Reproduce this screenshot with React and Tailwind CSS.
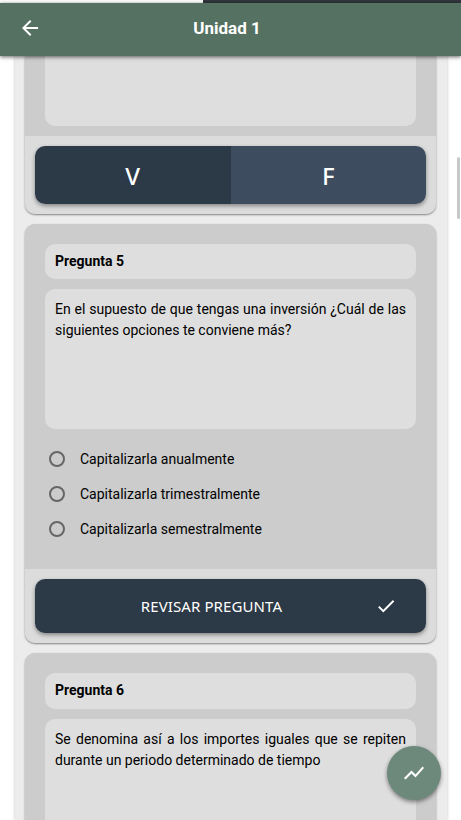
import React from "react";
import { MdArrowBack, MdCheck, MdShowChart } from "react-icons/md";

const BUTTON_SHADOW = "shadow-[0_2px_4px_rgba(0,0,0,0.4)]";

function Card({ children, footer }) {
  return (
    <section className="shrink-0 overflow-hidden rounded-[10px] bg-[#cccccc] shadow-[0_1px_2px_rgba(0,0,0,0.45)]">
      <div className="px-5 pt-5">{children}</div>
      {footer && <div className="bg-[#dcdcdc] p-[10px]">{footer}</div>}
    </section>
  );
}

function Question({ title, text }) {
  return (
    <>
      <h2 className="h-[35.25px] rounded-[10px] bg-[#dedede] px-[10px] text-[14px] font-bold leading-[35px]">{title}</h2>
      <p className="mt-[10px] h-[140px] rounded-[10px] bg-[#dedede] p-[10px] text-justify text-[14px] leading-[21px]">
        {text}
      </p>
    </>
  );
}

function Option({ children }) {
  return (
    <label className="flex h-[35px] items-center gap-[15px] pl-1 text-[14px]">
      <span className="h-4 w-4 rounded-full border-2 border-[#656767]" />
      <span className="pt-px">{children}</span>
    </label>
  );
}

export default function App() {
  return (
    <div className="relative flex h-[820px] w-[461px] flex-col overflow-hidden bg-white font-['Roboto',sans-serif] text-black">
      <div className="flex h-[3px] shrink-0 bg-[#30363c]">
        <div className="w-[203px] bg-white" />
      </div>
      <header className="relative z-10 grid h-[53px] shrink-0 grid-cols-[60px_1fr_68px] items-center bg-[#557162] text-white shadow-[0_1px_4px_rgba(0,0,0,0.6)]">
        <MdArrowBack size={24} className="ml-[18px] -mt-[3px]" />
        <h1 className="-mt-[2px] pl-px text-center text-[17px] font-bold">Unidad 1</h1>
      </header>

      <main className="mr-[14px] ml-[15px] flex min-h-0 flex-1 flex-col gap-[10px] overflow-hidden bg-[#ececec] pr-[11px] pl-[10px] shadow-[0_0_3px_rgba(0,0,0,0.25)]">
        <section className="shrink-0 overflow-hidden rounded-b-[10px] bg-[#cccccc] shadow-[0_1px_2px_rgba(0,0,0,0.45)]">
          <div className="px-5 pb-[10px]">
            <div className="h-[70px] rounded-b-[10px] bg-[#dedede]" />
          </div>
          <div className="bg-[#dcdcdc] p-[10px]">
            <div className={`flex h-[58px] overflow-hidden rounded-[10px] font-['Noto_Sans',sans-serif] text-[24px] font-medium text-white ${BUTTON_SHADOW}`}>
              <button className="flex-1 bg-[#2c3946] pt-[2px]">V</button>
              <button className="flex-1 bg-[#3d4d5f] pt-[2px]">F</button>
            </div>
          </div>
        </section>

        <Card
          footer={
            <button className={`grid h-[54px] w-full grid-cols-[1fr_79px] items-center rounded-[10px] bg-[#2c3946] font-['Noto_Sans',sans-serif] text-[15px] tracking-[0.1px] text-white ${BUTTON_SHADOW}`}>
              <span className="pb-px pl-[41px]">REVISAR PREGUNTA</span>
              <MdCheck size={22} className="ml-[28px]" />
            </button>
          }
        >
          <Question
            title="Pregunta 5"
            text="En el supuesto de que tengas una inversión ¿Cuál de las siguientes opciones te conviene más?"
          />
          <div className="pt-[12.25px] pb-[22.75px]">
            <Option>Capitalizarla anualmente</Option>
            <Option>Capitalizarla trimestralmente</Option>
            <Option>Capitalizarla semestralmente</Option>
          </div>
        </Card>

        <Card>
          <Question
            title="Pregunta 6"
            text="Se denomina así a los importes iguales que se repiten durante un periodo determinado de tiempo"
          />
        </Card>
      </main>

      <div className="absolute top-[157px] right-[1px] h-[62px] w-[3px] rounded-full bg-[#c8c8c8]" />
      <button className="absolute top-[746px] left-[387px] z-20 flex h-[54px] w-[54px] items-center justify-center rounded-full bg-[#6d897c] text-white shadow-[0_2px_4px_rgba(0,0,0,0.45)]">
        <MdShowChart size={24} />
      </button>
    </div>
  );
}
